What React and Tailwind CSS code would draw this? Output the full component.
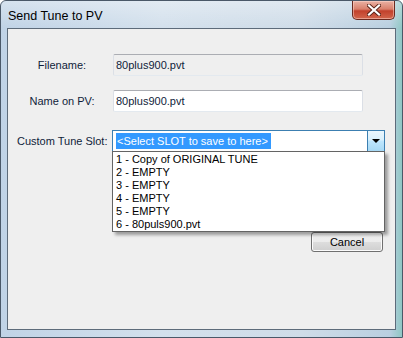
import { useState } from "react";

const slots = [
  "1 - Copy of ORIGINAL TUNE",
  "2 - EMPTY",
  "3 - EMPTY",
  "4 - EMPTY",
  "5 - EMPTY",
  "6 - 80puls900.pvt",
];

function TextBox({ value, readOnly }) {
  return (
    <div
      className={
        "w-[250px] h-[22px] flex items-center pl-[2px] rounded-[2px] border border-t-[#abadb3] border-x-[#dbdfe6] border-b-[#e3e9ef] " +
        (readOnly ? "bg-[#efefef]" : "bg-white")
      }
    >
      {value}
    </div>
  );
}

function CloseButton() {
  return (
    <div className="w-[43px] h-[19px] mr-[7px] rounded-b-[5px] border border-t-0 border-[#6b2a20] bg-[linear-gradient(#eab2a4,#d9806c_45%,#c2412c_55%,#d2664c)] flex items-center justify-center shadow-[inset_0_0_0_1px_rgba(255,220,210,0.5)]">
      <svg width="14" height="12" viewBox="0 0 14 12">
        <path
          d="M2 1.5 L12 10.5 M12 1.5 L2 10.5"
          stroke="#5a2418"
          strokeWidth="4"
          strokeLinecap="square"
        />
        <path
          d="M2 1.5 L12 10.5 M12 1.5 L2 10.5"
          stroke="#ffffff"
          strokeWidth="2.2"
          strokeLinecap="square"
        />
      </svg>
    </div>
  );
}

export default function App() {
  const [name, setName] = useState("80plus900.pvt");

  return (
    <div className="w-[403px] h-[338px] overflow-hidden font-['Liberation_Sans',Arial,sans-serif] text-[11px] text-[#0f1d3a] bg-[linear-gradient(90deg,#c0d3e6,#d3e0ec_40%,#cfdce8_75%,#b9cfe0_97%,#8fc7c4)] border border-[#4a5868] rounded-t-[6px] flex flex-col">
      {/* title bar */}
      <div className="h-[27px] flex justify-between items-start bg-[linear-gradient(180deg,rgba(255,255,255,0.35),rgba(255,255,255,0))]">
        <div className="pl-[7px] pt-[6px] text-[12.5px] text-black">
          Send Tune to PV
        </div>
        <CloseButton />
      </div>

      {/* client area */}
      <div className="ml-[6px] mr-[6px] h-[302px] border border-[#5d6b7a] bg-[#efefef] relative">
        <div className="pt-[25px] flex flex-col">
          <div className="flex items-center h-[22px]">
            <div className="w-[90px] ml-[9px] text-center whitespace-nowrap">Filename:</div>
            <div className="ml-[6px]">
              <TextBox value="80plus900.pvt" readOnly />
            </div>
          </div>

          <div className="flex items-center h-[22px] mt-[14px]">
            <div className="w-[90px] ml-[9px] text-center whitespace-nowrap">Name on PV:</div>
            <div className="ml-[6px]">
              <TextBox value={name} />
            </div>
          </div>

          <div className="flex items-center h-[22px] mt-[18px]">
            <div className="w-[90px] ml-[9px] text-center whitespace-nowrap">
              Custom Tune Slot:
            </div>
            <div className="ml-[5px] w-[273px] h-[22px] border border-[#3c7fb1] bg-white flex items-stretch">
              <div className="flex-1 flex items-center pl-[3px]">
                <span className="bg-[#3399ff] text-white h-[16px] flex items-center pl-[1px] pr-[3px]">
                  &lt;Select SLOT to save to here&gt;
                </span>
              </div>
              <div className="w-[17px] border-l border-[#3c7fb1] bg-[linear-gradient(#eaf6fd,#d9f0fc_45%,#bee6fd_50%,#a7d9f5)] flex items-center justify-center">
                <div className="w-0 h-0 border-x-[4px] border-x-transparent border-t-[4px] border-t-black" />
              </div>
            </div>
          </div>

          <div className="flex justify-end mt-[80px] mr-[12px]">
            <button
              className="w-[72px] h-[20px] rounded-[3px] border border-[#707070] bg-[linear-gradient(#f2f2f2,#ebebeb_50%,#dddddd_51%,#cfcfcf)] text-[11px] text-black shadow-[inset_0_0_0_1px_#fbfbfb]"
              onClick={() => setName(name)}
            >
              Cancel
            </button>
          </div>
        </div>

        {/* open dropdown list */}
        <div className="absolute left-[104px] top-[122px] w-[273px] h-[81px] bg-white border border-[#646464] shadow-[3px_3px_3px_rgba(0,0,0,0.35)] pt-[1px]">
          {slots.map((s) => (
            <div key={s} className="h-[13px] leading-[13px] pl-[3px] text-black">
              {s}
            </div>
          ))}
        </div>
      </div>
    </div>
  );
}
